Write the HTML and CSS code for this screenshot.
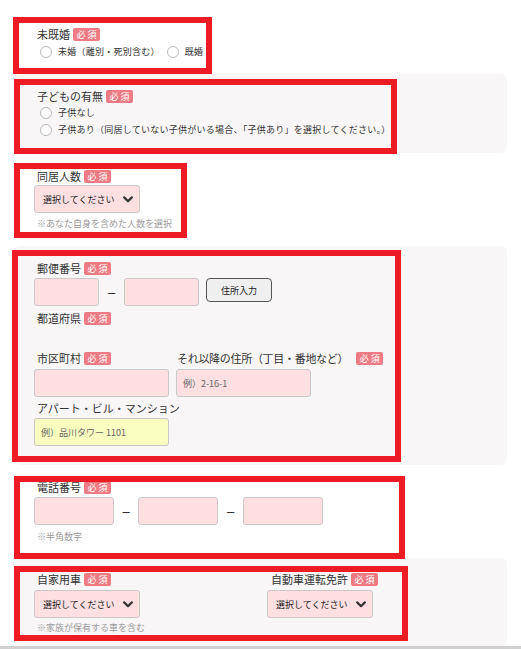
FILE: index.html
```html
<!DOCTYPE html>
<html lang="ja">
<head>
<meta charset="utf-8">
<title>Form</title>
<link rel="stylesheet" href="styles.css">
</head>
<body>
<div class="page">
  <div class="form">
    <section class="sec s1">
      <div class="label">未既婚<span class="badge">必須</span></div>
      <div class="radios inline r1">
        <label class="opt"><input type="radio" name="m"><span>未婚（離別・死別含む）</span></label>
        <label class="opt"><input type="radio" name="m"><span>既婚</span></label>
      </div>
    </section>

    <section class="sec gray s2">
      <div class="label">子どもの有無<span class="badge">必須</span></div>
      <div class="radios stack">
        <label class="opt"><input type="radio" name="c"><span>子供なし</span></label>
        <label class="opt"><input type="radio" name="c"><span>子供あり（同居していない子供がいる場合、「子供あり」を選択してください。）</span></label>
      </div>
    </section>

    <section class="sec s3">
      <div class="label">同居人数<span class="badge">必須</span></div>
      <div class="select sel-top2">選択してください<svg class="chev" width="10" height="7" viewBox="0 0 10 7"><path d="M1.2 1.4 L5 5.2 L8.8 1.4" fill="none" stroke="#333" stroke-width="2.2" stroke-linecap="round" stroke-linejoin="round"/></svg></div>
      <div class="hint h6">※あなた自身を含めた人数を選択</div>
    </section>

    <section class="sec gray s4">
      <div class="label">郵便番号<span class="badge">必須</span></div>
      <div class="row zip">
        <div class="field w65"></div>
        <span class="dash d25">–</span>
        <div class="field w75"></div>
        <button class="btn" type="button">住所入力</button>
      </div>
      <div class="label pref">都道府県<span class="badge">必須</span></div>
      <div class="cols addr">
        <div class="col c135">
          <div class="label">市区町村<span class="badge">必須</span></div>
          <div class="field w135 mt4"></div>
        </div>
        <div class="col">
          <div class="label lp1 tight">それ以降の住所（丁目・番地など）<span class="badge bg5">必須</span></div>
          <div class="field w135 mt4"><span class="ph">例）2-16-1</span></div>
        </div>
      </div>
      <div class="label apt">アパート・ビル・マンション</div>
      <div class="field w135 yellow mt3"><span class="ph">例）品川タワー 1101</span></div>
    </section>

    <section class="sec s5">
      <div class="label">電話番号<span class="badge">必須</span></div>
      <div class="row tel">
        <div class="field w80"></div>
        <span class="dash d24">–</span>
        <div class="field w80"></div>
        <span class="dash d25">–</span>
        <div class="field w80"></div>
      </div>
      <div class="hint h7">※半角数字</div>
    </section>

    <section class="sec gray s6">
      <div class="cols">
        <div class="col c233">
          <div class="label">自家用車<span class="badge">必須</span></div>
          <div class="select sel-top4">選択してください<svg class="chev" width="10" height="7" viewBox="0 0 10 7"><path d="M1.2 1.4 L5 5.2 L8.8 1.4" fill="none" stroke="#333" stroke-width="2.2" stroke-linecap="round" stroke-linejoin="round"/></svg></div>
          <div class="hint h5">※家族が保有する車を含む</div>
        </div>
        <div class="col">
          <div class="label lp4">自動車運転免許<span class="badge">必須</span></div>
          <div class="select sel-top4">選択してください<svg class="chev" width="10" height="7" viewBox="0 0 10 7"><path d="M1.2 1.4 L5 5.2 L8.8 1.4" fill="none" stroke="#333" stroke-width="2.2" stroke-linecap="round" stroke-linejoin="round"/></svg></div>
        </div>
      </div>
    </section>
  </div>
  <div class="bottom-line"></div>

  <div class="mark m1"></div>
  <div class="mark m2"></div>
  <div class="mark m3"></div>
  <div class="mark m4"></div>
  <div class="mark m5"></div>
  <div class="mark m6"></div>
</div>
</body>
</html>
```

FILE: styles.css
```css
html, body {
  margin: 0;
  padding: 0;
  background: #ffffff;
}
body {
  font-family: "Noto Sans CJK JP", "Noto Sans", sans-serif;
  color: #333333;
}
.page {
  position: relative;
  width: 521px;
  height: 649px;
  overflow: hidden;
}
.form {
  margin-left: 14px;
  width: 493px;
  padding-top: 13px;
}
.sec {
  box-sizing: border-box;
  padding: 14px 20px 0 20px;
}
.sec.gray {
  background: #f8f6f7;
  border-radius: 6px;
}
.s1 { height: 61px; padding-top: 14px; }
.s2 { height: 79px; padding-top: 15px; }
.s3 { height: 93px; padding-top: 16px; }
.s4 { height: 219px; padding-top: 15px; }
.s5 { height: 93px; padding-top: 15px; }
.s6 { height: 88px; padding-top: 14px; }

.label {
  display: flex;
  align-items: center;
  gap: 3px;
  height: 14px;
  line-height: 14px;
  font-size: 11px;
  color: #333333;
  padding-left: 3px;
  white-space: nowrap;
}
.lp1 { padding-left: 1px; }
.lp4 { padding-left: 4px; }
.tight { letter-spacing: -0.3px; }
.badge {
  display: inline-flex;
  align-items: center;
  justify-content: center;
  width: 27px;
  height: 13px;
  background: #ee7a84;
  color: #ffffff;
  font-size: 9px;
  line-height: 13px;
  letter-spacing: 2px;
  text-indent: 2px;
  border-radius: 2px;
}
.bg5 { margin-left: 5px; }

.radios { padding-left: 6px; }
.radios.inline {
  display: flex;
  gap: 7px;
  margin-top: 4px;
}
.radios.stack {
  display: flex;
  flex-direction: column;
  gap: 3px;
  margin-top: 3px;
}
.opt {
  display: flex;
  align-items: center;
  gap: 6px;
  height: 14px;
  font-size: 9px;
  line-height: 14px;
  letter-spacing: 0.25px;
  color: #333333;
  white-space: nowrap;
}
.opt input {
  appearance: none;
  -webkit-appearance: none;
  margin: 0;
  width: 12px;
  height: 12px;
  border: 1px solid #b8b8b8;
  border-radius: 50%;
  background: #ffffff;
  box-sizing: border-box;
  flex: none;
}

.select {
  box-sizing: border-box;
  width: 106px;
  height: 28px;
  background: #ffdfe1;
  border: 1px solid #c9c9c9;
  border-radius: 3px;
  display: flex;
  align-items: center;
  justify-content: space-between;
  padding: 0 6px 0 8px;
  font-size: 9px;
  color: #222222;
  white-space: nowrap;
}
.chev { flex: none; }
.sel-top2 { margin-top: 2px; }
.sel-top4 { margin-top: 4px; }

.hint {
  font-size: 9px;
  line-height: 10px;
  height: 10px;
  color: #9a9a9a;
  padding-left: 3px;
  white-space: nowrap;
}
.h5 { margin-top: 5px; }
.h6 { margin-top: 6px; }
.h7 { margin-top: 7px; }

.row {
  display: flex;
  align-items: flex-start;
}
.zip { margin-top: 3px; }
.tel { margin-top: 3px; }

.field {
  box-sizing: border-box;
  height: 28px;
  background: #ffdfe1;
  border: 1px solid #c9c9c9;
  border-radius: 3px;
  display: flex;
  align-items: center;
  padding-left: 6px;
}
.field.yellow { background: #f9fdc0; }
.w65 { width: 65px; }
.w75 { width: 75px; }
.w80 { width: 80px; }
.w135 { width: 135px; }
.mt3 { margin-top: 3px; }
.mt4 { margin-top: 4px; }
.ph {
  font-size: 9px;
  color: #666666;
  white-space: nowrap;
}

.dash {
  display: flex;
  align-items: center;
  justify-content: center;
  height: 28px;
  font-family: "Liberation Sans", Arial, sans-serif;
  font-size: 13px;
  color: #222222;
}
.d24 { width: 24px; }
.d25 { width: 25px; }

.btn {
  box-sizing: border-box;
  margin: 0 0 0 7px;
  width: 66px;
  height: 24px;
  background: #efefef;
  border: 1px solid #555555;
  border-radius: 4px;
  font-family: "Noto Sans CJK JP", sans-serif;
  font-size: 9px;
  color: #222222;
  padding: 0;
}

.pref { margin-top: 5px; }
.cols {
  display: flex;
  align-items: flex-start;
}
.addr { margin-top: 26px; gap: 7px; }
.c135 { width: 135px; flex: none; }
.c233 { width: 233px; flex: none; }
.apt { margin-top: 4px; }

.bottom-line {
  height: 3px;
  background: #d0d0d0;
}

.mark {
  position: absolute;
  box-sizing: border-box;
  border: 6px solid #ed1c24;
  pointer-events: none;
}
.m1 { left: 13px; top: 17px; width: 199px; height: 57px; }
.m2 { left: 14px; top: 79px; width: 383px; height: 75px; }
.m3 { left: 14px; top: 163px; width: 173px; height: 75px; }
.m4 { left: 12px; top: 250px; width: 389px; height: 212px; }
.m5 { left: 14px; top: 476px; width: 391px; height: 83px; }
.m6 { left: 14px; top: 566px; width: 394px; height: 75px; }
```
